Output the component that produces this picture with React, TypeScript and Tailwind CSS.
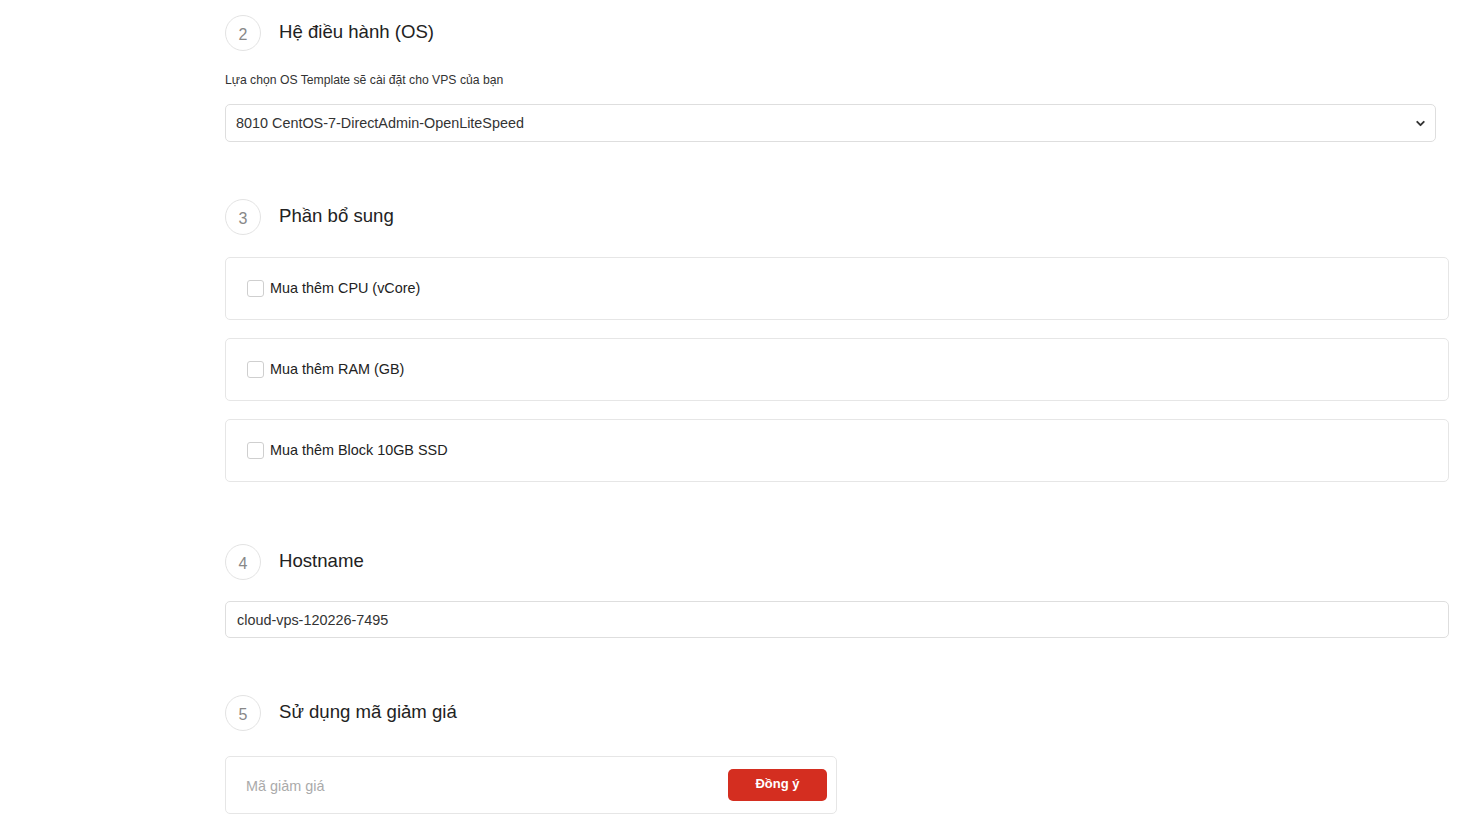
import { ChevronDown } from "lucide-react";

const addons = ["Mua thêm CPU (vCore)", "Mua thêm RAM (GB)", "Mua thêm Block 10GB SSD"];

function StepHeader({ n, title }: { n: number; title: string }) {
  return (
    <div className="flex items-center h-[36px]">
      <div className="w-[36px] h-[36px] rounded-full border border-[#e3e3e3] flex items-center justify-center pt-[3px] text-[16px] text-[#888]">
        {n}
      </div>
      <h2 className="ml-[18px] text-[18.6px] text-[#222] leading-none -mt-[1px]">{title}</h2>
    </div>
  );
}

export default function App() {
  return (
    <div className="min-h-screen bg-white font-['Liberation_Sans',Arial,sans-serif] text-[#333]">
      <div className="pl-[225px] pt-[15px] w-[1449px]">
        {/* 2 - OS */}
        <StepHeader n={2} title="Hệ điều hành (OS)" />
        <p className="mt-[21px] text-[12.2px] leading-[17px] text-[#333]">
          Lựa chọn OS Template sẽ cài đặt cho VPS của bạn
        </p>
        <div className="mt-[15px] w-[1211px] h-[38px] border border-[#dedede] rounded-[5px] flex items-center justify-between pl-[10px] pr-[8px]">
          <span className="text-[14.4px] text-[#333] pt-[1px]">8010 CentOS-7-DirectAdmin-OpenLiteSpeed</span>
          <ChevronDown size={13} strokeWidth={3.5} className="text-[#333]" />
        </div>

        {/* 3 - addons */}
        <div className="mt-[57px]">
          <StepHeader n={3} title="Phần bổ sung" />
        </div>
        <div className="mt-[22px] flex flex-col gap-[18px]">
          {addons.map((a) => (
            <div
              key={a}
              className="h-[63px] border border-[#e6e6e6] rounded-[5px] flex items-center pl-[21px]"
            >
              <span className="w-[17px] h-[17px] border border-[#cfcfcf] rounded-[3px] bg-white" />
              <span className="ml-[6px] text-[14.4px] text-[#222]">{a}</span>
            </div>
          ))}
        </div>

        {/* 4 - hostname */}
        <div className="mt-[62px]">
          <StepHeader n={4} title="Hostname" />
        </div>
        <div className="mt-[21px] h-[37px] border border-[#dedede] rounded-[5px] flex items-center pl-[11px]">
          <span className="text-[14.4px] text-[#333] pt-[3px]">cloud-vps-120226-7495</span>
        </div>

        {/* 5 - coupon */}
        <div className="mt-[57px]">
          <StepHeader n={5} title="Sử dụng mã giảm giá" />
        </div>
        <div className="mt-[25px] w-[612px] h-[58px] border border-[#e6e6e6] rounded-[5px] flex items-center justify-between pl-[20px] pr-[9px]">
          <span className="text-[14.4px] text-[#aaa] pt-[3px]">Mã giảm giá</span>
          <button className="w-[99px] h-[32px] rounded-[5px] bg-[#d42e20] text-white text-[13px] font-bold pb-[2px]">
            Đồng ý
          </button>
        </div>
      </div>
    </div>
  );
}
